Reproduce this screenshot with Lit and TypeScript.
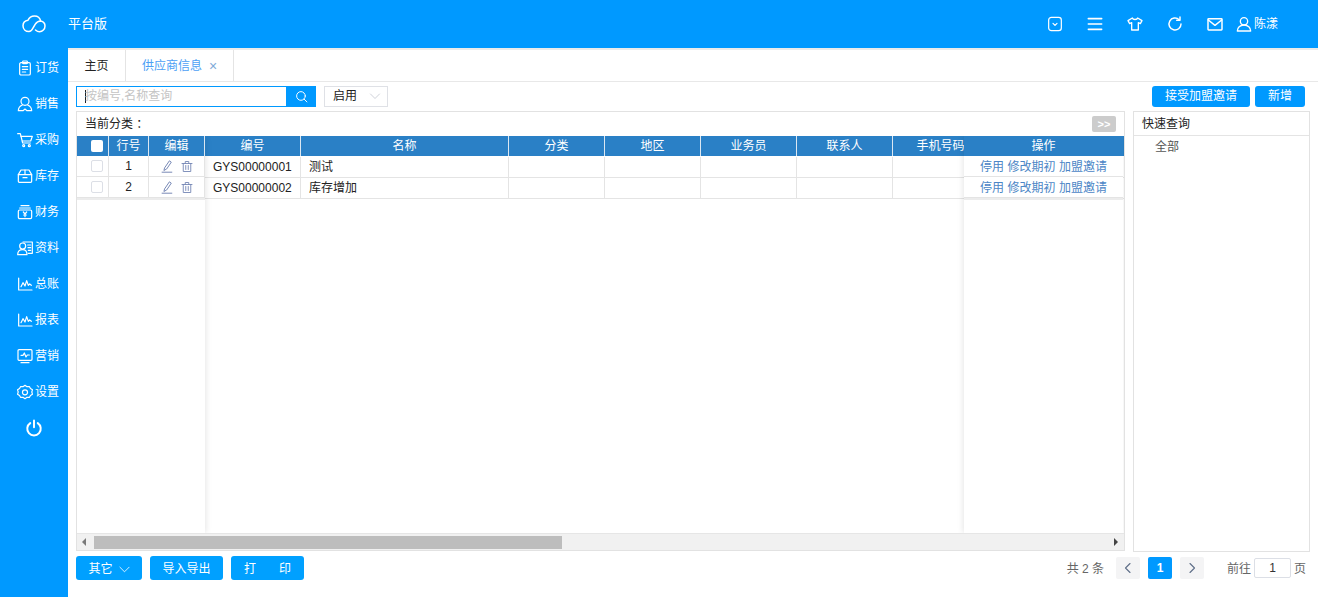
import { LitElement, html, css, svg } from "lit";
import { customElement } from "lit/decorators.js";

const s = (w: number, h: number, body: unknown, vb = "0 0 24 24", sw = 1.8) =>
  html`<svg width=${w} height=${h} viewBox=${vb} fill="none" stroke="currentColor" stroke-width=${sw} stroke-linecap="round" stroke-linejoin="round">${body}</svg>`;

const chart = svg`<path d="M2.500 3v18h20"/><path d="M6 16l3-6 3 5 2.500-8 2.500 7 2-2 2.500 2"/>`;
const side: [string, unknown][] = [
  ["订货", svg`<rect x="4" y="4" width="16" height="18.500" rx="2"/><rect x="8.500" y="1.500" width="7" height="4" rx="1"/><path d="M8 10h8M8 14h8M8 18h5"/>`],
  ["销售", svg`<circle cx="12" cy="8" r="6"/><path d="M8 13.500c-3.500 1.500-6 4.500-6 8.500h7l3-2.500 3 2.500h7c0-4-2.500-7-6-8.500"/>`],
  ["采购", svg`<path d="M1 2.500h4l3.500 14h11.500"/><path d="M6 6.500h17l-2.500 7H8"/><circle cx="10" cy="20.500" r="1.500"/><circle cx="18.500" cy="20.500" r="1.500"/>`],
  ["库存", svg`<path d="M6 3h12l4 7v10a1.500 1.500 0 0 1-1.500 1.500h-17A1.500 1.500 0 0 1 2 20V10z"/><path d="M2 10h20M12 3v7M9 14.500h6"/>`],
  ["财务", svg`<rect x="2" y="9" width="20" height="13" rx="2"/><path d="M6 2.500h12M4 6h16M9.500 12l2.500 3 2.500-3M12 15v4M10 16.500h4"/>`],
  ["资料", svg`<circle cx="8.500" cy="9" r="4.500"/><path d="M1 22c0-4.500 3-7.500 7.500-7.500s6.500 3 6.500 7.500zM9 3h14v17h-6M16 7.500h4.500M16.500 11.500h4M17 15.500h3.500"/>`],
  ["总账", chart],
  ["报表", chart],
  ["营销", svg`<rect x="1.500" y="2.500" width="21" height="16" rx="1.500"/><path d="M6 11h3l2-3.500 2.500 6 2-3h3M6 22h12"/>`],
  ["设置", svg`<path d="M12 1.500l3 2 3.500-.2 1.700 3 3 1.900-1 3.300 1 3.300-3 1.900-1.700 3-3.500-.2-3 2-3-2-3.500.2-1.700-3-3-1.900 1-3.300-1-3.300 3-1.900 1.700-3 3.500.2z" transform="translate(0 .5)"/><circle cx="12" cy="12.500" r="3.800"/>`],
];

const cols = [
  { t: "编号", w: 96 },
  { t: "名称", w: 208 },
  { t: "分类", w: 96 },
  { t: "地区", w: 96 },
  { t: "业务员", w: 96 },
  { t: "联系人", w: 96 },
  { t: "手机号码", w: 96 },
  { t: "操作", w: 160 },
];
const rows = [
  ["GYS00000001", "测试"],
  ["GYS00000002", "库存增加"],
];

@customElement("app-root")
export class AppRoot extends LitElement {
  static styles = css`
    :host { display: block; width: 1318px; height: 597px; overflow: hidden; background: #fff;
      font-family: "Liberation Sans", "Noto Sans CJK SC", sans-serif; font-size: 12px; line-height: 16px; color: #222; }
    * { box-sizing: border-box; }
    svg { display: block; flex: none; }
    .top { height: 48px; background: #0099ff; color: #fff; display: flex; align-items: center; }
    .logo { width: 68px; display: flex; justify-content: center; }
    .brand { font-size: 13px; }
    .top-icons { margin-left: auto; display: flex; align-items: center; gap: 24px; padding-right: 40px; }
    .user { display: flex; align-items: center; gap: 2px; margin-left: -11px; }
    .body { display: flex; height: 549px; }
    .side { width: 68px; background: #0099ff; color: #fff; flex: none; padding-top: 2px; }
    .nav { height: 36px; display: flex; align-items: center; padding-left: 17px; gap: 2px; }
    .power { height: 36px; display: flex; align-items: center; justify-content: center; }
    .main { flex: 1; min-width: 0; display: flex; flex-direction: column; }
    .tabs { height: 34px; display: flex; border-top: 2px solid #ebebeb; border-bottom: 1px solid #e8e8e8; }
    .tab { height: 31px; display: flex; align-items: center; justify-content: center; border-right: 1px solid #e4e4e4; }
    .tab.home { width: 58px; }
    .tab.cur { width: 108px; color: #4d9ff5; background: #fff; gap: 7px; }
    .x { color: #7fa9d8; font-size: 14px; line-height: 1; }
    .bar { height: 29px; display: flex; align-items: center; padding: 0 13px 1px 8px; }
    .search { width: 210px; height: 21px; border: 1px solid #0099ff; border-right: 0; display: flex; align-items: center; padding-left: 8px; color: #c4c4c4; }
    .caret { width: 1px; height: 13px; background: #222; margin-right: -1px; }
    .sbtn { width: 30px; height: 21px; background: #0099ff; color: #fff; display: flex; align-items: center; justify-content: center; }
    .sel { width: 64px; height: 21px; margin-left: 8px; border: 1px solid #dfe1e6; display: flex; align-items: center; justify-content: space-between; padding: 0 6px 0 8px; color: #222; }
    .sel svg { color: #c8ccd4; }
    .btn { height: 21px; background: #0099ff; color: #fff; border-radius: 3px; display: flex; align-items: center; justify-content: center; }
    .b1 { width: 98px; margin-left: auto; }
    .b2 { width: 50px; margin-left: 5px; }
    .content { height: 442px; display: flex; padding: 0 8px; gap: 8px; }
    .panel { width: 1049px; height: 440px; border: 1px solid #e2e2e2; display: flex; flex-direction: column; }
    .cur-row { height: 24px; display: flex; align-items: center; justify-content: space-between; padding: 0 8px; flex: none; }
    .gg { width: 24px; height: 16px; background: #ccc; color: #fff; border-radius: 2px; font-size: 11px; font-weight: 700; display: flex; align-items: center; justify-content: center; }
    .tbl { position: relative; flex: 1; min-height: 0; overflow: hidden; }
    .row { display: flex; }
    .head { height: 20px; background: #2a80c6; color: #fff; }
    .head .c { border-right: 1px solid #dbe7f2; }
    .c { flex: none; display: flex; align-items: center; justify-content: center; border-right: 1px solid #e4e4e4; height: 100%; }
    .dr { height: 21px; border-bottom: 1px solid #e4e4e4; color: #222; }
    .dr .c.l { justify-content: flex-start; padding-left: 8px; }
    .dr.first { margin-top: 1px; }
    .fix { position: absolute; top: 0; bottom: 0; background: #fff; }
    .fl { left: 0; width: 128px; box-shadow: 1px 0 6px rgba(0,0,0,.1); }
    .fr { right: 1px; width: 159px; box-shadow: -1px 0 6px rgba(0,0,0,.1); }
    .fix .dr.first { margin-top: 0; }
    .cb { width: 12px; height: 12px; border: 1px solid #dcdfe6; border-radius: 2px; background: #fff; margin-left: 8px; }
    .head .cb { border: 0; }
    .ops { gap: 3.5px; color: #4c86c6; padding-top: 1px; }
    .sep { height: 2px; background: #ececec; }
    .ic { gap: 7px; color: #7486b4; }
    .scroll { height: 17px; flex: none; background: #f1f1f1; border-top: 1px solid #e6e6e6; display: flex; align-items: center; }
    .arrow { width: 0; height: 0; border: 4px solid transparent; flex: none; }
    .al { border-right-color: #7a7a7a; border-left: 0; margin-left: 5px; }
    .ar { border-left-color: #444; border-right: 0; margin-left: auto; margin-right: 6px; }
    .thumb { width: 468px; height: 13px; background: #bdbdbd; margin-left: 8px; }
    .quick { width: 177px; height: 441px; border: 1px solid #e2e2e2; }
    .qh { height: 24px; display: flex; align-items: center; padding: 1px 0 0 8px; border-bottom: 1px solid #e4e4e4; }
    .qi { padding: 3px 0 0 21px; color: #555; }
    .foot { height: 24px; margin-top: 3px; display: flex; align-items: center; padding: 0 8px; }
    .f { height: 24px; background: #00a0ff; padding-top: 2px; }
    .f1 { width: 66px; gap: 6px; margin-right: 8px; }
    .f2 { width: 73px; margin-right: 8px; }
    .f3 { width: 73px; gap: 23px; }
    .pager { margin-left: auto; display: flex; align-items: center; color: #666; }
    .pager span { padding-top: 2px; }
    .pb { width: 24px; height: 22px; background: #f4f4f5; border-radius: 2px; display: flex; align-items: center; justify-content: center; color: #5f6f88; margin-left: 8px; }
    .pb.on { background: #0099ff; color: #fff; font-weight: 700; }
    .pb.first { margin-left: 12px; }
    .go { margin-left: 23px; }
    .inp { width: 37px; height: 20px; border: 1px solid #dcdfe6; margin: 0 3px; display: flex; align-items: center; justify-content: center; color: #333; border-radius: 2px; }
    .end { margin-right: 4px; }
  `;

  private chev(w = 12, h = 12) {
    return s(w, h, svg`<path d="M3 8l9 9 9-9"/>`);
  }

  private dataRows() {
    return rows.map((r, i) => html`<div class="row dr ${i === 0 ? "first" : ""}">
      ${cols.map((c, j) => html`<div class="c ${j < 2 ? "l" : ""}" style="width:${c.w}px">${j < 2 ? r[j] : ""}</div>`)}
    </div>`);
  }

  render() {
    return html`
      <div class="top">
        <div class="logo">${s(24, 18, svg`<path d="M7 16.500C3.500 16.500 1 14 1 10.800C1 7.800 3 5.700 6 5.300C7 2.700 9.800 1 12.500 1C15.500 1 18 3 18.700 6C21.200 6.500 23 8.500 23 11C23 14.200 20.500 16.800 17.500 16.800C15.800 16.800 14.600 16 13.500 15M18.700 6C16 6 14.300 7.500 13.300 9.200L11 13C10 15 8.800 16.500 7 16.500"/>`, "0 0 24 18", 1.5)}</div>
        <div class="brand">平台版</div>
        <div class="top-icons">
          ${s(16, 16, svg`<rect x="2.500" y="2" width="19" height="20" rx="4"/><path d="M9 11l3 3 3-3"/>`)}
          ${s(16, 16, svg`<path d="M2 4h20M2 12h20M2 20h20" stroke-width="2.400"/>`)}
          ${s(16, 16, svg`<path d="M8 3L1.500 7l2.500 4.500L7 10v11h10V10l3 1.500L22.500 7 16 3c-1 3-7 3-8 0z"/>`, "0 0 24 24", 2)}
          ${s(16, 16, svg`<path d="M21 12a9 9 0 1 1-2.800-6.500"/><path d="M19.500 1.500v5h-5" />`, "0 0 24 24", 2.200)}
          ${s(16, 16, svg`<rect x="1.500" y="4" width="21" height="17" rx="1"/><path d="M2 6l10 8 10-8"/>`, "0 0 24 24", 2.200)}
          <div class="user">${s(16, 16, svg`<circle cx="12" cy="8" r="5.500"/><path d="M2 22.500c0-5 4-9 10-9s10 4 10 9z"/>`, "0 0 24 24", 2)}陈漾</div>
        </div>
      </div>
      <div class="body">
        <div class="side">
          ${side.map(([t, ic]) => html`<div class="nav">${s(16, 16, ic)}${t}</div>`)}
          <div class="power">${s(18, 18, svg`<path d="M7 5.500a9 9 0 1 0 10 0M12 2v9"/>`, "0 0 24 24", 2.600)}</div>
        </div>
        <div class="main">
          <div class="tabs">
            <div class="tab home">主页</div>
            <div class="tab cur">供应商信息<span class="x">×</span></div>
          </div>
          <div class="bar">
            <div class="search"><span class="caret"></span>按编号,名称查询</div>
            <div class="sbtn">${s(13, 13, svg`<circle cx="11" cy="11" r="8"/><path d="M17 17l5 5"/>`)}</div>
            <div class="sel">启用${this.chev()}</div>
            <div class="btn b1">接受加盟邀请</div>
            <div class="btn b2">新增</div>
          </div>
          <div class="content">
            <div class="panel">
              <div class="cur-row">当前分类 ：<span class="gg">&gt;&gt;</span></div>
              <div class="tbl">
                <div style="margin-left:128px">
                  <div class="row head">${cols.map((c) => html`<div class="c" style="width:${c.w}px">${c.t}</div>`)}</div>
                  ${this.dataRows()}
                </div>
                <div class="fix fl">
                  <div class="row head">
                    <div class="c" style="width:32px"><span class="cb"></span></div>
                    <div class="c" style="width:40px">行号</div>
                    <div class="c" style="width:56px">编辑</div>
                  </div>
                  ${[1, 2].map((n, i) => html`<div class="row dr ${i === 0 ? "first" : ""}">
                    <div class="c" style="width:32px"><span class="cb"></span></div>
                    <div class="c" style="width:40px">${n}</div>
                    <div class="c ic" style="width:56px">
                      ${s(13, 13, svg`<path d="M7 14L15.500 1.500l3.500 2.500-8.500 12.500L6 19zM2 22.500h18"/>`)}
                      ${s(12, 13, svg`<path d="M2 6h20M8.500 6V2h7v4M4.500 6v16h15V6M9.500 10v8M14.500 10v8"/>`)}
                    </div>
                  </div>`)}
                  <div class="sep"></div>
                </div>
                <div class="fix fr">
                  <div class="row head"><div class="c" style="width:159px;border-right:0">操作</div></div>
                  ${[0, 1].map((i) => html`<div class="row dr ${i === 0 ? "first" : ""}">
                    <div class="c ops" style="width:159px;border-right:0"><span>停用</span><span>修改期初</span><span>加盟邀请</span></div>
                  </div>`)}
                  <div class="sep"></div>
                </div>
              </div>
              <div class="scroll"><span class="arrow al"></span><span class="thumb"></span><span class="arrow ar"></span></div>
            </div>
            <div class="quick">
              <div class="qh">快速查询</div>
              <div class="qi">全部</div>
            </div>
          </div>
          <div class="foot">
            <div class="btn f f1">其它${s(11, 11, svg`<path d="M2 7l10 10 10-10"/>`)}</div>
            <div class="btn f f2">导入导出</div>
            <div class="btn f f3"><span>打</span><span>印</span></div>
            <div class="pager">
              <span>共 2 条</span>
              <div class="pb first">${s(12, 12, svg`<path d="M16 3l-9 9 9 9"/>`, "0 0 24 24", 2.200)}</div>
              <div class="pb on">1</div>
              <div class="pb">${s(12, 12, svg`<path d="M8 3l9 9-9 9"/>`, "0 0 24 24", 2.200)}</div>
              <span class="go">前往</span>
              <div class="inp">1</div>
              <span class="end">页</span>
            </div>
          </div>
        </div>
      </div>
    `;
  }
}
